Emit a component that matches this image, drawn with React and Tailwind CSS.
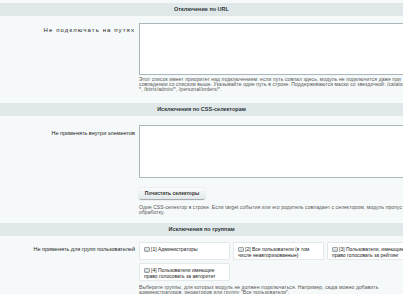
import React from "react";

const font = { fontFamily: '"Liberation Sans", Arial, sans-serif' };

// Заголовок секции
const SectionHeader = ({ title }) => (
  <div className="h-[13px] bg-[#e0e8ea] flex items-center justify-center text-[5.5px] font-bold text-[#2d3436]">
    {title}
  </div>
);

const Hint = ({ lines }) => (
  <div className="text-[5px] leading-[5.2px] tracking-[0.1px] text-[#555] whitespace-nowrap">
    {lines.map((l, i) => (
      <div key={i}>{l}</div>
    ))}
  </div>
);

const Row = ({ label, labelCls, children }) => (
  <div className="flex">
    <div className={`w-[136px] shrink-0 text-right pr-[1px] text-[#1c1c1c] whitespace-nowrap ${labelCls}`}>{label}</div>
    <div className="ml-[3px] w-[290px] shrink-0">{children}</div>
  </div>
);

const groups = [
  ["[1] Администраторы"],
  ["[2] Все пользователи (в том", "числе неавторизованные)"],
  ["[3] Пользователи, имеющие", "право голосовать за рейтинг"],
  ["[4] Пользователи имеющие", "право голосовать за авторитет"],
];

const GroupBox = ({ lines }) => (
  <div className="w-[91px] h-[18px] bg-white border border-[#e3e9eb] rounded-[1px] px-[4px] pt-[3px] text-[5px] leading-[6px] text-[#222]">
    <div className="flex items-start gap-[1.5px]">
      <span className="mt-[0.5px] w-[5.5px] h-[5.5px] shrink-0 rounded-[1px] border border-[#9aa3a8] bg-gradient-to-b from-[#e8ecee] to-[#c9cfd2]" />
      <span>{lines[0]}</span>
    </div>
    {lines[1] && <div>{lines[1]}</div>}
  </div>
);

export default function App() {
  return (
    <div className="w-[403px] h-[294px] overflow-hidden bg-[#f5f9f9]" style={font}>
      <div className="pt-[3px]">
        <SectionHeader title="Отключение по URL" />

        <div className="mt-[7px]">
          <Row label="Не подключать на путях" labelCls="pt-[3px] text-[6px] tracking-[1.1px]">
            <div className="h-[52px] bg-white border border-[#a9b6bd]" />
            <div className="mt-[2px]">
              <Hint
                lines={[
                  "Этот список имеет приоритет над подключением: если путь совпал здесь, модуль не подключится даже при",
                  "совпадении со списком выше. Указывайте один путь в строке. Поддерживаются маски со звездочкой: /catalog/",
                  "*, /bitrix/admin/*, /personal/orders/*.",
                ]}
              />
            </div>
          </Row>
        </div>

        <div className="mt-[10px]">
          <SectionHeader title="Исключения по CSS-селекторам" />
        </div>

        <div className="mt-[9px]">
          <Row label="Не применять внутри элементов" labelCls="pt-[4px] text-[5.5px]">
            <div className="h-[53px] bg-white border border-[#a9b6bd]" />
            <button className="mt-[8px] w-[66px] h-[11px] rounded-[2px] bg-gradient-to-b from-[#fbfcfc] to-[#e2e8ea] shadow-[0_0.5px_1px_rgba(0,0,0,0.35)] text-[5px] font-bold text-[#333]">
              Почистить селекторы
            </button>
            <div className="mt-[3px]">
              <Hint
                lines={[
                  "Один CSS-селектор в строке. Если target события или его родитель совпадает с селектором, модуль пропустит",
                  "обработку.",
                ]}
              />
            </div>
          </Row>
        </div>

        <div className="mt-[8px]">
          <SectionHeader title="Исключения по группам" />
        </div>

        <div className="mt-[6px]">
          <Row label="Не применять для групп пользователей" labelCls="pt-[3px] text-[5.5px]">
            <div className="flex flex-wrap gap-x-[3px] gap-y-[3px] w-[290px]">
              {groups.map((g, i) => (
                <GroupBox key={i} lines={g} />
              ))}
            </div>
            <div className="mt-[4px]">
              <Hint
                lines={[
                  "Выберите группы, для которых модуль не должен подключаться. Например, сюда можно добавить",
                  "администраторов, редакторов или группу \"Все пользователи\".",
                ]}
              />
            </div>
          </Row>
        </div>
      </div>
    </div>
  );
}
